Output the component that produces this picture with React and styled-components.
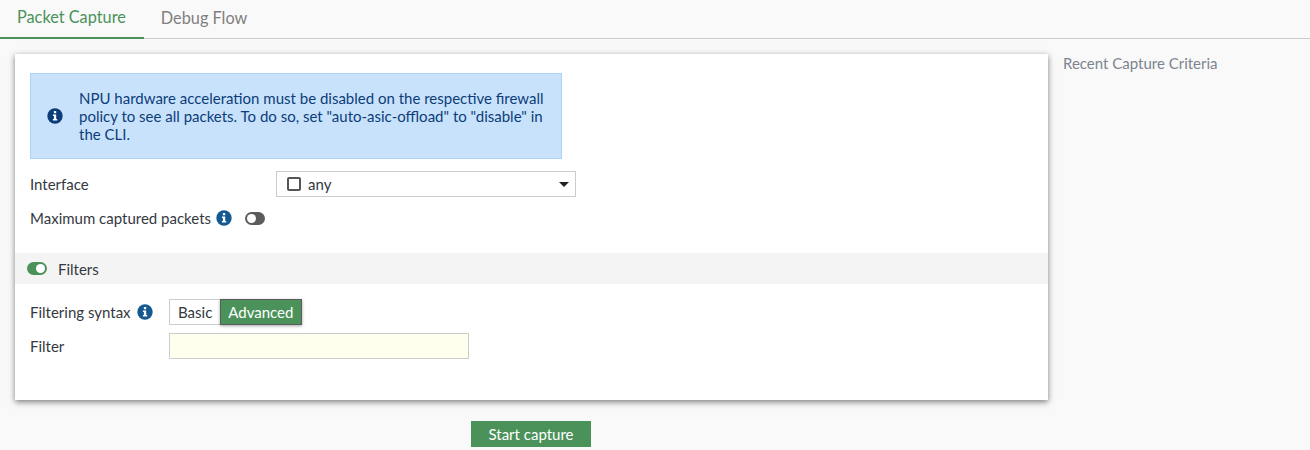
import React from 'react';
import styled, { createGlobalStyle } from 'styled-components';

const GREEN = '#4a925a';

const Global = createGlobalStyle`
  html, body {
    margin: 0;
    padding: 0;
    height: 450px;
    overflow: hidden;
    background: #f9f9f9;
    font-family: Lato, "Open Sans", sans-serif;
    font-size: 15px;
    color: #34393f;
  }
`;

const Tabs = styled.div`
  display: flex;
  height: 38px;
  border-bottom: 1px solid #ccc;
`;

const Tab = styled.div`
  height: 39px;
  padding: 0 18px 4px 17px;
  display: flex;
  align-items: center;
  font-size: 16.3px;
  color: ${p => (p.$active ? GREEN : '#7f7f7f')};
  border-bottom: ${p => (p.$active ? `2px solid ${GREEN}` : 'none')};
  box-sizing: border-box;
  margin-bottom: -1px;
`;

const Body = styled.div`
  display: flex;
  align-items: flex-start;
  padding: 15px 0 0 15px;
`;

const Main = styled.div`
  width: 1033px;
  flex: none;
`;

const Card = styled.div`
  height: 346px;
  box-sizing: border-box;
  padding-top: 19px;
  background: #fff;
  box-shadow: 0 2px 6px rgba(0, 0, 0, 0.5);
`;

const Notice = styled.div`
  width: 532px;
  height: 86px;
  box-sizing: border-box;
  margin-left: 15px;
  padding: 0 10px 0 16px;
  display: flex;
  align-items: center;
  gap: 16px;
  background: #c9e2fc;
  border: 1px solid #aed3f8;
  color: #0c3d78;
  line-height: 18px;
`;

const Row = styled.div`
  display: flex;
  align-items: center;
  padding-left: 15px;
  height: ${p => p.$h}px;
  margin-top: ${p => p.$mt || 0}px;
`;

const Label = styled.div`
  width: ${p => p.$w}px;
  flex: none;
`;

const InlineLabel = styled.div`
  display: flex;
  align-items: center;
  gap: ${p => p.$gap || 5}px;
`;

const Select = styled.div`
  width: 300px;
  height: 26px;
  box-sizing: border-box;
  border: 1px solid #ccc;
  display: flex;
  align-items: center;
  padding: 0 6px 0 10px;
  background: #fff;
`;

const Check = styled.span`
  width: 14px;
  height: 14px;
  box-sizing: border-box;
  border: 2px solid #555;
  border-radius: 2px;
  margin-right: 7px;
`;

const Caret = styled.span`
  margin-left: auto;
  width: 0;
  height: 0;
  border-left: 5px solid transparent;
  border-right: 5px solid transparent;
  border-top: 5px solid #222;
`;

const Toggle = styled.span`
  width: 20px;
  height: 13px;
  box-sizing: border-box;
  border-radius: 7px;
  background: ${p => (p.$on ? GREEN : '#5c5c5c')};
  display: flex;
  align-items: center;
  justify-content: ${p => (p.$on ? 'flex-end' : 'flex-start')};
  padding: 0 2px;
  flex: none;
  margin-left: ${p => p.$ml || 0}px;
  &::after {
    content: '';
    width: 9px;
    height: 9px;
    border-radius: 50%;
    background: #fff;
  }
`;

const SectionBar = styled.div`
  height: 31px;
  margin-top: 22px;
  padding-left: 12px;
  display: flex;
  align-items: center;
  gap: 11px;
  background: #f4f4f4;
`;

const Segment = styled.div`
  display: flex;
  height: 26px;
`;

const SegButton = styled.div`
  height: 26px;
  box-sizing: border-box;
  padding: 0 8px 0 ${p => (p.$active ? 7 : 8)}px;
  display: flex;
  align-items: center;
  border: 1px solid ${p => (p.$active ? '#5c5c5c' : '#ccc')};
  border-right: ${p => (p.$active ? '1px solid #5c5c5c' : 'none')};
  background: ${p => (p.$active ? GREEN : '#fff')};
  color: ${p => (p.$active ? '#fff' : '#34393f')};
  box-shadow: ${p => (p.$active ? '0 1px 3px rgba(0,0,0,0.35)' : 'none')};
`;

const TextInput = styled.div`
  width: 300px;
  height: 26px;
  box-sizing: border-box;
  border: 1px solid #ccc;
  background: #ffffee;
`;

const Footer = styled.div`
  display: flex;
  justify-content: center;
  padding: 21px 1px 0 0;
`;

const Button = styled.div`
  width: 120px;
  height: 26px;
  display: flex;
  align-items: center;
  justify-content: center;
  background: ${GREEN};
  color: #fff;
`;

const Side = styled.div`
  margin-left: 15px;
  color: #7d8490;
  line-height: 18px;
`;

const InfoIcon = ({ color = '#14598f', size = 16 }) => (
  <svg width={size} height={size} viewBox="0 0 16 16" style={{ flex: 'none' }}>
    <circle cx="8" cy="8" r="7.7" fill={color} />
    <rect x="6.9" y="3.1" width="2.3" height="2.2" rx="0.4" fill="#fff" />
    <path d="M5.9 6.5h3.3v4.6h1v1.5H5.9v-1.5h1V8H5.9z" fill="#fff" />
  </svg>
);

export default function App() {
  return (
    <>
      <Global />
      <Tabs>
        <Tab $active>Packet Capture</Tab>
        <Tab>Debug Flow</Tab>
      </Tabs>
      <Body>
        <Main>
          <Card>
            <Notice>
              <InfoIcon color="#0c3d78" />
              <div>
                NPU hardware acceleration must be disabled on the respective firewall policy to see all
                packets. To do so, set "auto-asic-offload" to "disable" in the CLI.
              </div>
            </Notice>
            <Row $h={26} $mt={12}>
              <Label $w={246}>Interface</Label>
              <Select>
                <Check />
                any
                <Caret />
              </Select>
            </Row>
            <Row $h={26} $mt={8}>
              <InlineLabel>
                Maximum captured packets
                <InfoIcon />
              </InlineLabel>
              <Toggle $ml={13} />
            </Row>
            <SectionBar>
              <Toggle $on />
              Filters
            </SectionBar>
            <Row $h={26} $mt={15}>
              <Label $w={139}>
                <InlineLabel $gap={6}>
                  Filtering syntax
                  <InfoIcon />
                </InlineLabel>
              </Label>
              <Segment>
                <SegButton>Basic</SegButton>
                <SegButton $active>Advanced</SegButton>
              </Segment>
            </Row>
            <Row $h={26} $mt={8}>
              <Label $w={139}>Filter</Label>
              <TextInput />
            </Row>
          </Card>
          <Footer>
            <Button>Start capture</Button>
          </Footer>
        </Main>
        <Side>Recent Capture Criteria</Side>
      </Body>
    </>
  );
}
